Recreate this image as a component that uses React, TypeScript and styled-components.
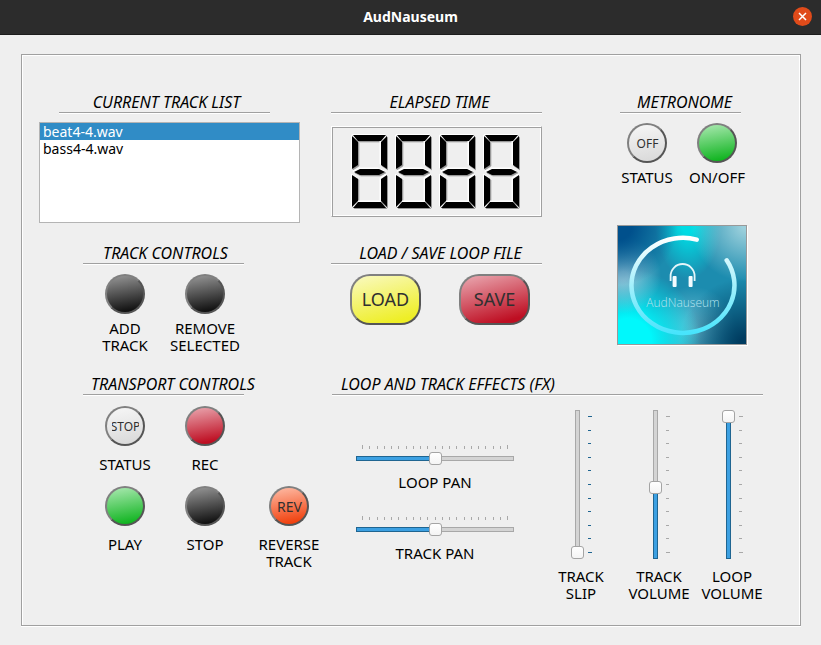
import React from 'react';
import styled, { createGlobalStyle } from 'styled-components';

const GlobalStyle = createGlobalStyle`
  * { box-sizing: border-box; }
  body {
    margin: 0;
    background: #efefef;
    color: #000;
    font: 15px/17px "Noto Sans", "Open Sans", sans-serif;
  }
  button, select, input { font: inherit; }
`;

const TitleBar = styled.header`
  display: grid;
  grid-template-columns: 1fr auto 1fr;
  align-items: center;
  height: 35px;
  padding: 0 9px 2px;
  background: #2c2c2c;
  border-bottom: 1px solid #1c1c1c;
  color: #fff;
`;

const AppName = styled.h1`
  grid-column: 2;
  margin: 0;
  font-size: 14px;
  font-weight: 700;
`;

const CloseButton = styled.button`
  display: grid;
  place-items: center;
  justify-self: end;
  width: 19px;
  height: 19px;
  padding: 0;
  border: 0;
  border-radius: 50%;
  background: #e04b1a;
`;

const Panel = styled.main`
  margin: 19px 20px 19px 21px;
  padding: 39px 37px 23px 17px;
  border: 1px solid #a0a0a0;
  box-shadow: inset 1px 1px #fff, inset -1px 0 #fff, 0 1px #fff;
`;

const UpperGrid = styled.div`
  display: grid;
  grid-template-columns: 261fr 255fr 146fr;
  grid-template-rows: auto 1fr;
  column-gap: 31px;
  row-gap: 22px;
`;

const LowerGrid = styled.div`
  display: grid;
  grid-template-columns: minmax(0, 293fr) minmax(0, 431fr);
  margin-top: 22px;
`;

const SideColumn = styled.div`
  grid-column: 3;
  grid-row: 1 / span 2;
`;

const Heading = styled.h2<{ $width?: number; $indent?: number; $left?: number; $start?: boolean }>`
  width: ${p => (p.$width ? `${p.$width}px` : 'auto')};
  margin: 0 0 0 ${p => p.$indent ?? 0}px;
  padding: 0 0 2px ${p => p.$left ?? 0}px;
  border-bottom: 1px solid #a0a0a0;
  box-shadow: 0 1px #fff;
  font-size: 16px;
  line-height: 16px;
  font-style: italic;
  font-weight: 400;
  text-align: ${p => (p.$start ? 'left' : 'center')};
  white-space: nowrap;
`;

const TrackList = styled.select`
  display: block;
  width: 100%;
  height: 101px;
  margin-top: 9px;
  padding: 0;
  border: 1px solid #b4b4b4;
  border-radius: 0;
  background: #fff;
  color: #000;
  font-size: 14px;
  outline: 0;
  overflow: hidden;

  option {
    display: flex;
    align-items: center;
    height: 17px;
    min-height: 17px;
    padding: 0 3px;
  }
  option:checked {
    background: #308cc6 linear-gradient(#308cc6, #308cc6);
    color: #fff;
    -webkit-text-fill-color: #fff;
  }
`;

const Lcd = styled.div`
  display: flex;
  justify-content: center;
  gap: 7px;
  width: 211px;
  margin-top: 13px;
  padding: 7px 2px 7px 0;
  border: 1px solid;
  border-color: #fff #a0a0a0 #a0a0a0 #fff;
  box-shadow: inset 1px 1px #a0a0a0, inset -1px -1px #fff;

  svg { display: block; }
`;

const MetronomeCells = styled.div`
  display: grid;
  grid-template-columns: repeat(2, 70px);
  margin: 10px 0 0 -5px;
`;

const TrackCells = styled.div`
  display: grid;
  grid-template-columns: repeat(2, 80px);
  margin: 10px 0 0 46px;
`;

const TransportCells = styled.div`
  display: grid;
  grid-template-columns: 80px 80px 88px;
  row-gap: 13px;
  margin: 11px 0 0 46px;
`;

const Cell = styled.div<{ $gap?: number; $column?: number }>`
  grid-column: ${p => p.$column ?? 'auto'};
  display: flex;
  flex-direction: column;
  align-items: center;
  gap: ${p => p.$gap ?? 6}px;
`;

const Caption = styled.label`
  text-align: center;
  white-space: pre;
`;

type Tone = 'black' | 'red' | 'green' | 'grey' | 'orange' | 'yellow';

const tones: Record<Tone, string> = {
  black: '#a0a0a0, #0c0c0c 90%',
  red: '#ecb0b8, #be0e22 85%',
  green: '#b4ecba, #10b420 88%',
  grey: '#f8f8f8, #d6d6d6',
  orange: '#ffc4b0, #f03c08 90%',
  yellow: '#fafac8, #eeee26 85%',
};

const RoundButton = styled.button<{ $tone: Tone; $small?: boolean }>`
  display: grid;
  place-items: center;
  width: 40px;
  height: 40px;
  padding: 0 5px;
  border: 2px solid;
  border-color: #808080 #555 #555 #808080;
  border-radius: 50%;
  background: linear-gradient(170deg, ${p => tones[p.$tone]}) border-box;
  color: #303030;
  font-size: ${p => (p.$small ? 12 : 14)}px;
`;

const Face = styled.span`
  display: flex;
  justify-content: center;
  width: 27px;
  overflow: hidden;
`;

const FileButtons = styled.div`
  display: flex;
  gap: 38px;
  margin: 10px 0 0 19px;
`;

const FileButton = styled.button<{ $tone: Tone }>`
  width: 71px;
  height: 51px;
  padding: 0;
  border: 2px solid;
  border-color: #808080 #555 #555 #808080;
  border-radius: 20px;
  background: linear-gradient(165deg, ${p => tones[p.$tone]}) border-box;
  color: #303030;
  font-size: 18px;
`;

const Logo = styled.div`
  width: 130px;
  height: 120px;
  margin-top: 39px;
  border: 1px solid #999;
  box-shadow: 1px 1px #fff;
  background:
    radial-gradient(circle at 0 0, #00508c 8%, #00508c00 34%),
    radial-gradient(circle at 100% 0, #9cd0dc 2%, #9cd0dc00 32%),
    radial-gradient(ellipse at 55% -6%, #00dce4 8%, #00dce400 34%),
    radial-gradient(circle at 4% 42%, #8cc4d8 3%, #8cc4d800 27%),
    radial-gradient(circle at 8% 98%, #00f8fc 14%, #00f8fc00 44%),
    radial-gradient(circle at 100% 100%, #003c60 4%, #003c6000 38%),
    radial-gradient(circle at 58% 88%, #68bcd2 2%, #68bcd200 34%),
    #1c8caf;

  svg { display: block; }
`;

const Effects = styled.div`
  display: flex;
  justify-content: space-between;
  align-items: flex-start;
`;

const PanGroup = styled.div`
  display: flex;
  flex-direction: column;
  gap: 25px;
  margin: 50px 0 0 24px;
`;

const VolumeGroup = styled.div`
  display: grid;
  grid-template-columns: 72px 84px 62px;
  margin-top: 15px;
`;

const Fader = styled.div<{ $vertical?: boolean }>`
  display: flex;
  flex-direction: ${p => (p.$vertical ? 'row' : 'column')};
  gap: ${p => (p.$vertical ? 4 : 2)}px;

  svg { display: block; }
`;

const thumb = `
  appearance: none;
  width: 13px;
  height: 13px;
  border: 1px solid #a4a4a4;
  border-radius: 3px;
  background: linear-gradient(#fff, #f4f4f4);
`;

const PanRange = styled.input<{ $fill: number }>`
  appearance: none;
  display: block;
  width: 158px;
  height: 13px;
  margin: 0;
  background:
    linear-gradient(to right, #3ca0e2 ${p => p.$fill}%, #d4d4d4 ${p => p.$fill}%) center / 156px 3px no-repeat,
    linear-gradient(to right, #1f6591 ${p => p.$fill}%, #a8a8a8 ${p => p.$fill}%) center / 158px 5px no-repeat;

  &::-webkit-slider-thumb { ${thumb} }
`;

const VolumeRange = styled.input<{ $fill: number }>`
  appearance: none;
  display: block;
  width: 13px;
  height: 149px;
  margin: 0;
  writing-mode: vertical-lr;
  direction: rtl;
  background:
    linear-gradient(to top, #3ca0e2 ${p => p.$fill}%, #d4d4d4 ${p => p.$fill}%) center / 3px 147px no-repeat,
    linear-gradient(to top, #1f6591 ${p => p.$fill}%, #a8a8a8 ${p => p.$fill}%) center / 5px 149px no-repeat;

  &::-webkit-slider-thumb { ${thumb} }
`;

const PanTicks = () => (
  <svg width="158" height="5" aria-hidden="true">
    {Array.from({ length: 21 }, (_, i) => (
      <rect key={i} x={6 + Math.round(i * 7.25)} y={i % 20 ? 1 : 0} width="1" height={i % 20 ? 3 : 4} fill="#a8a8a8" />
    ))}
  </svg>
);

const VolumeTicks = ({ color }: { color: string }) => (
  <svg width="4" height="149" aria-hidden="true">
    {Array.from({ length: 11 }, (_, i) => (
      <rect key={i} x="0" y={6 + Math.round(i * 13.6)} width={i % 10 ? 3 : 4} height="1" fill={color} />
    ))}
  </svg>
);

const segments = [
  'M2 1H35L30 7H7Z',
  'M1 2L7 8V31L1 35Z',
  'M36 2L30 8V31L36 35Z',
  'M3 38L9 35H28L34 38L28 41H9Z',
  'M1 41L7 45V67L1 73Z',
  'M36 41L30 45V67L36 73Z',
  'M7 68H30L35 74H2Z',
];

const Digit = () => (
  <svg width="37" height="75" viewBox="0 0 37 75" aria-hidden="true">
    {segments.map(d => (
      <g key={d}>
        <path d={d} fill="#fff" stroke="#fff" transform="translate(-1 -1)" />
        <path d={d} fill="#999" stroke="#999" transform="translate(1 1)" strokeWidth="0.6" />
      </g>
    ))}
    {segments.map(d => <path key={d} d={d} />)}
  </svg>
);

const LogoArt = () => (
  <svg width="128" height="118" viewBox="0 0 128 118" role="img" aria-label="AudNauseum logo">
    <defs>
      <linearGradient id="ring" x1="0" y1="0" x2="0" y2="1">
        <stop offset="0" stopColor="#fff" />
        <stop offset="0.5" stopColor="#a4f0fc" />
        <stop offset="1" stopColor="#48e4fc" />
      </linearGradient>
    </defs>
    <path
      d="M78.7 13.6A51.5 47.5 0 1 0 108.7 34.3"
      fill="none" stroke="url(#ring)" strokeWidth="4.5" strokeLinecap="round"
    />
    <path d="M52.6 55V50A12 12 0 0 1 76.6 50V55" fill="none" stroke="#e4f6fa" strokeWidth="1.8" />
    <rect x="54.6" y="50" width="4" height="11" rx="1" fill="#f4fcff" />
    <rect x="70.6" y="50" width="4" height="11" rx="1" fill="#f4fcff" />
    <text
      x="65" y="81" textAnchor="middle" fontFamily="Open Sans" fontWeight="300" fontSize="12" fill="#b4e2ee"
    >
      AudNauseum
    </text>
  </svg>
);

const volumes = [
  { id: 'track-slip', label: 'TRACK\nSLIP', value: 0, ticks: '#1f6591' },
  { id: 'track-volume', label: 'TRACK\nVOLUME', value: 48, ticks: '#a8a8a8' },
  { id: 'loop-volume', label: 'LOOP\nVOLUME', value: 100, ticks: '#a8a8a8' },
];

const pans = [
  { id: 'loop-pan', label: 'LOOP PAN' },
  { id: 'track-pan', label: 'TRACK PAN' },
];

interface ControlProps {
  id: string;
  tone: Tone;
  label: string;
  face?: string;
  small?: boolean;
  gap?: number;
  column?: number;
}

const Control = ({ id, tone, label, face, small, gap, column }: ControlProps) => (
  <Cell $gap={gap} $column={column}>
    <RoundButton id={id} $tone={tone} $small={small}>{face && <Face>{face}</Face>}</RoundButton>
    <Caption htmlFor={id}>{label}</Caption>
  </Cell>
);

export default function App() {
  return (
    <>
      <GlobalStyle />
      <TitleBar>
        <AppName>AudNauseum</AppName>
        <CloseButton aria-label="Close">
          <svg width="9" height="9" viewBox="0 0 9 9" aria-hidden="true">
            <path d="M1 1L8 8M8 1L1 8" stroke="#fff" strokeWidth="1.5" />
          </svg>
        </CloseButton>
      </TitleBar>
      <Panel>
        <UpperGrid>
          <section>
            <Heading $width={211} $indent={20} $left={4}>CURRENT TRACK LIST</Heading>
            <TrackList size={5} defaultValue="beat" aria-label="Current track list">
              <option value="beat">beat4-4.wav</option>
              <option value="bass">bass4-4.wav</option>
            </TrackList>
          </section>
          <section>
            <Heading $width={211} $left={6}>ELAPSED TIME</Heading>
            <Lcd><Digit /><Digit /><Digit /><Digit /></Lcd>
          </section>
          <SideColumn>
            <Heading $width={121} $indent={3} $left={8}>METRONOME</Heading>
            <MetronomeCells>
              <Control id="metronome-status" tone="grey" face="OFF" small label="STATUS" />
              <Control id="metronome-toggle" tone="green" label="ON/OFF" />
            </MetronomeCells>
            <Logo><LogoArt /></Logo>
          </SideColumn>
          <section>
            <Heading $width={161} $indent={44} $left={4}>TRACK CONTROLS</Heading>
            <TrackCells>
              <Control id="add-track" tone="black" label={'ADD\nTRACK'} />
              <Control id="remove-track" tone="black" label={'REMOVE\nSELECTED'} />
            </TrackCells>
          </section>
          <section>
            <Heading $width={211} $left={8}>LOAD / SAVE LOOP FILE</Heading>
            <FileButtons>
              <FileButton $tone="yellow">LOAD</FileButton>
              <FileButton $tone="red">SAVE</FileButton>
            </FileButtons>
          </section>
        </UpperGrid>
        <LowerGrid>
          <section>
            <Heading $width={161} $indent={44} $left={8} $start>TRANSPORT CONTROLS</Heading>
            <TransportCells>
              <Control id="transport-status" tone="grey" face="STOP" small gap={10} label="STATUS" />
              <Control id="record" tone="red" gap={10} label="REC" />
              <Control id="play" tone="green" gap={10} column={1} label="PLAY" />
              <Control id="stop" tone="black" gap={10} label="STOP" />
              <Control id="reverse" tone="orange" face="REV" gap={10} label={'REVERSE\nTRACK'} />
            </TransportCells>
          </section>
          <section>
            <Heading $left={9} $start>LOOP AND TRACK EFFECTS (FX)</Heading>
            <Effects>
              <PanGroup>
                {pans.map(({ id, label }) => (
                  <Cell key={id} $gap={9}>
                    <Fader>
                      <PanTicks />
                      <PanRange id={id} type="range" defaultValue={50} $fill={50} />
                    </Fader>
                    <Caption htmlFor={id}>{label}</Caption>
                  </Cell>
                ))}
              </PanGroup>
              <VolumeGroup>
                {volumes.map(({ id, label, value, ticks }) => (
                  <Cell key={id} $gap={9}>
                    <Fader $vertical>
                      <VolumeRange id={id} type="range" defaultValue={value} $fill={value} />
                      <VolumeTicks color={ticks} />
                    </Fader>
                    <Caption htmlFor={id}>{label}</Caption>
                  </Cell>
                ))}
              </VolumeGroup>
            </Effects>
          </section>
        </LowerGrid>
      </Panel>
    </>
  );
}
